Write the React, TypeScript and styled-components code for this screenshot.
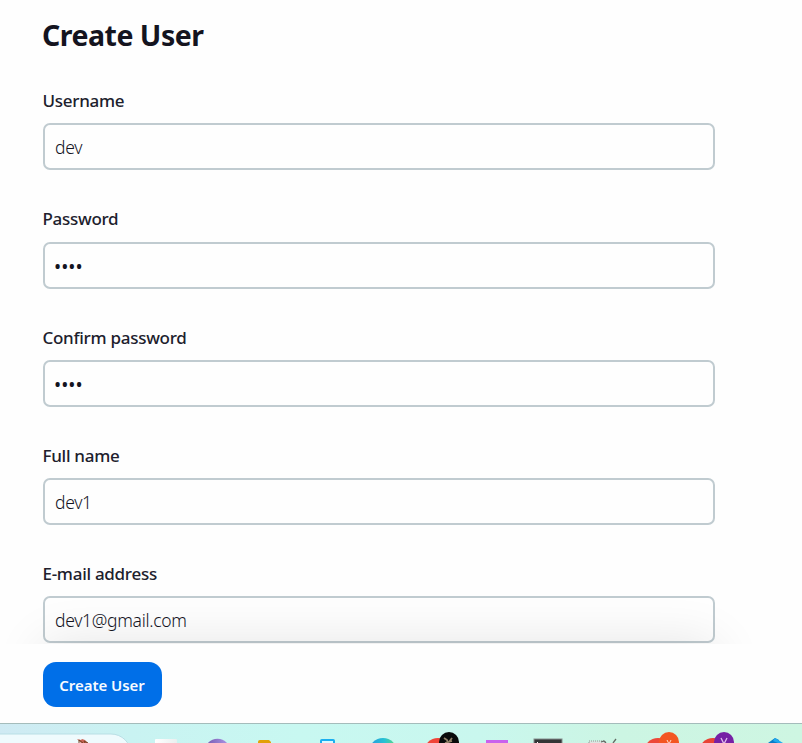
import React from "react";
import styled, { createGlobalStyle } from "styled-components";

const GlobalStyle = createGlobalStyle`
  * { box-sizing: border-box; }
  body { margin: 0; background: #fefefe; overflow: hidden; font-family: "Noto Sans", "Open Sans", sans-serif; color: #14141f; }
`;

const Page = styled.div`
  display: flex;
  flex-direction: column;
  width: 802px;
  height: 743px;
  overflow: hidden;
  background: #fefefe;
`;

const FormBody = styled.main`
  position: relative;
  flex: 0 0 644px;
  overflow: hidden;
  padding: 15px 87px 0 43px;

  &::after {
    content: "";
    position: absolute;
    left: 43px;
    right: 87px;
    top: 100%;
    height: 80px;
    box-shadow: 0 0 52px rgba(0, 0, 0, 0.11);
    pointer-events: none;
  }
`;

const Title = styled.h1`
  margin: 0 0 0 -1px;
  height: 73px;
  font-size: 28.5px;
  line-height: 40px;
  font-weight: 700;
  letter-spacing: -0.5px;
`;

const Field = styled.label`
  display: flex;
  flex-direction: column;
  height: 118.25px;
`;

const Caption = styled.span`
  height: 35.3px;
  margin-left: -0.5px;
  font-size: 17px;
  line-height: 25px;
  font-weight: 500;
  letter-spacing: -0.28px;
  color: #20202c;
`;

const TextInput = styled.input`
  width: 672px;
  height: 47px;
  padding: 1px 10px 0;
  border: 2px solid #c0cbd0;
  border-radius: 7px;
  outline: none;
  background: #fefefe;
  color: #14141f;
  font-family: inherit;
  font-size: 17.5px;
  font-weight: 350;
  letter-spacing: -0.3px;

  &[type="password"] {
    padding: 4px 9px 0;
    color: #14141f;
    font-size: 19px;
    font-weight: 400;
    letter-spacing: 0;
  }
`;

const Actions = styled.footer`
  flex: 0 0 79px;
  padding: 18px 43px 0;
`;

const SubmitButton = styled.button`
  width: 119px;
  height: 45px;
  padding: 1px 1px 0 0;
  border: 0;
  border-radius: 13px;
  background: #006fe8;
  color: #f8fbff;
  font-family: inherit;
  font-size: 15px;
  font-weight: 600;
  letter-spacing: -0.05px;
`;

const Taskbar = styled.div`
  flex: 0 0 20px;
  border-top: 1px solid #a4bcbb;
  background: linear-gradient(90deg, #cfeaf3 0, #c9f3f2 130px, #c8f8f1 300px, #c9f7ee 480px, #ccf5e3 620px, #cef6e2 100%);
`;

const TaskIcons = styled.svg`
  display: block;
`;

const fields = [
  { label: "Username", value: "dev", type: "text" },
  { label: "Password", value: "dev1", type: "password" },
  { label: "Confirm password", value: "dev1", type: "password" },
  { label: "Full name", value: "dev1", type: "text" },
  { label: "E-mail address", value: "dev1@gmail.com", type: "text" },
];

function TaskbarIcons() {
  return (
    <TaskIcons width="802" height="19" viewBox="0 724 802 19">
      <defs>
        <linearGradient id="purple"><stop stopColor="#7356ad" /><stop offset="1" stopColor="#b09bea" /></linearGradient>
        <linearGradient id="edge"><stop stopColor="#2698df" /><stop offset=".55" stopColor="#27c2d4" /><stop offset="1" stopColor="#62d879" /></linearGradient>
        <linearGradient id="paper"><stop stopColor="#fff" /><stop offset="1" stopColor="#e9efef" /></linearGradient>
      </defs>
      <rect x="-30" y="734" width="161" height="40" rx="20" fill="#effbfd" stroke="#b9dfe5" />
      <path d="M77 739l4 1 1-1 3 1 3 3h-7z" fill="#c96355" />
      <path d="M79 743l0-3 4 3m2 0l-1-2 4 2" fill="none" stroke="#704525" />
      <rect x="155" y="739" width="22" height="8" rx="1" fill="url(#paper)" />
      <circle cx="217.500" cy="752" r="13.200" fill="url(#purple)" />
      <path d="M258 744v-2q0-2 2-2h9l2 2v2z" fill="#e2a008" />
      <rect x="321" y="740" width="13" height="10" rx=".8" fill="#d8f8ff" stroke="#1baff0" strokeWidth="2" />
      <circle cx="383" cy="752" r="14" fill="url(#edge)" />
      <circle cx="438" cy="752" r="14" fill="#f04438" />
      <circle cx="449" cy="742" r="10" fill="#090b0b" />
      <path d="M444 738l3 2 1 3m1-1l3-4m-7 5l7-2" stroke="#92826a" strokeWidth="1.800" fill="none" />
      <rect x="486" y="740" width="22" height="9" fill="#c961ed" />
      <rect x="534" y="739" width="28" height="9" fill="#343536" stroke="#858d8d" />
      <path d="M537 742l2 2" stroke="#fff" />
      <rect x="589" y="741" width="16" height="8" fill="#dce5e1" stroke="#8d9893" strokeDasharray="1 1" />
      <path d="M601 742l3-1 2 2M613 743l3-4" stroke="#646b64" strokeWidth="1.300" fill="none" />
      <circle cx="658" cy="752" r="14" fill="#ed4738" />
      <circle cx="669" cy="742" r="10" fill="#f35622" />
      <path d="M667 740l2 4 2-4" stroke="#ffe1cf" fill="none" />
      <circle cx="713" cy="752" r="14" fill="#e94335" />
      <circle cx="724" cy="742" r="10" fill="#7620a5" />
      <path d="M721 738l3 6 3-6" stroke="#e1bced" strokeWidth="1.300" fill="none" />
      <path d="M768 743l7-5 4 2v4z" fill="#087dc9" />
      <path d="M773 741l2-3 8 5v2z" fill="#20a9ef" />
    </TaskIcons>
  );
}

export default function App() {
  return (
    <>
      <GlobalStyle />
      <Page>
        <FormBody>
          <Title>Create User</Title>
          {fields.map((field) => (
            <Field key={field.label}>
              <Caption>{field.label}</Caption>
              <TextInput type={field.type} defaultValue={field.value} />
            </Field>
          ))}
        </FormBody>
        <Actions>
          <SubmitButton type="button">Create User</SubmitButton>
        </Actions>
        <Taskbar>
          <TaskbarIcons />
        </Taskbar>
      </Page>
    </>
  );
}
